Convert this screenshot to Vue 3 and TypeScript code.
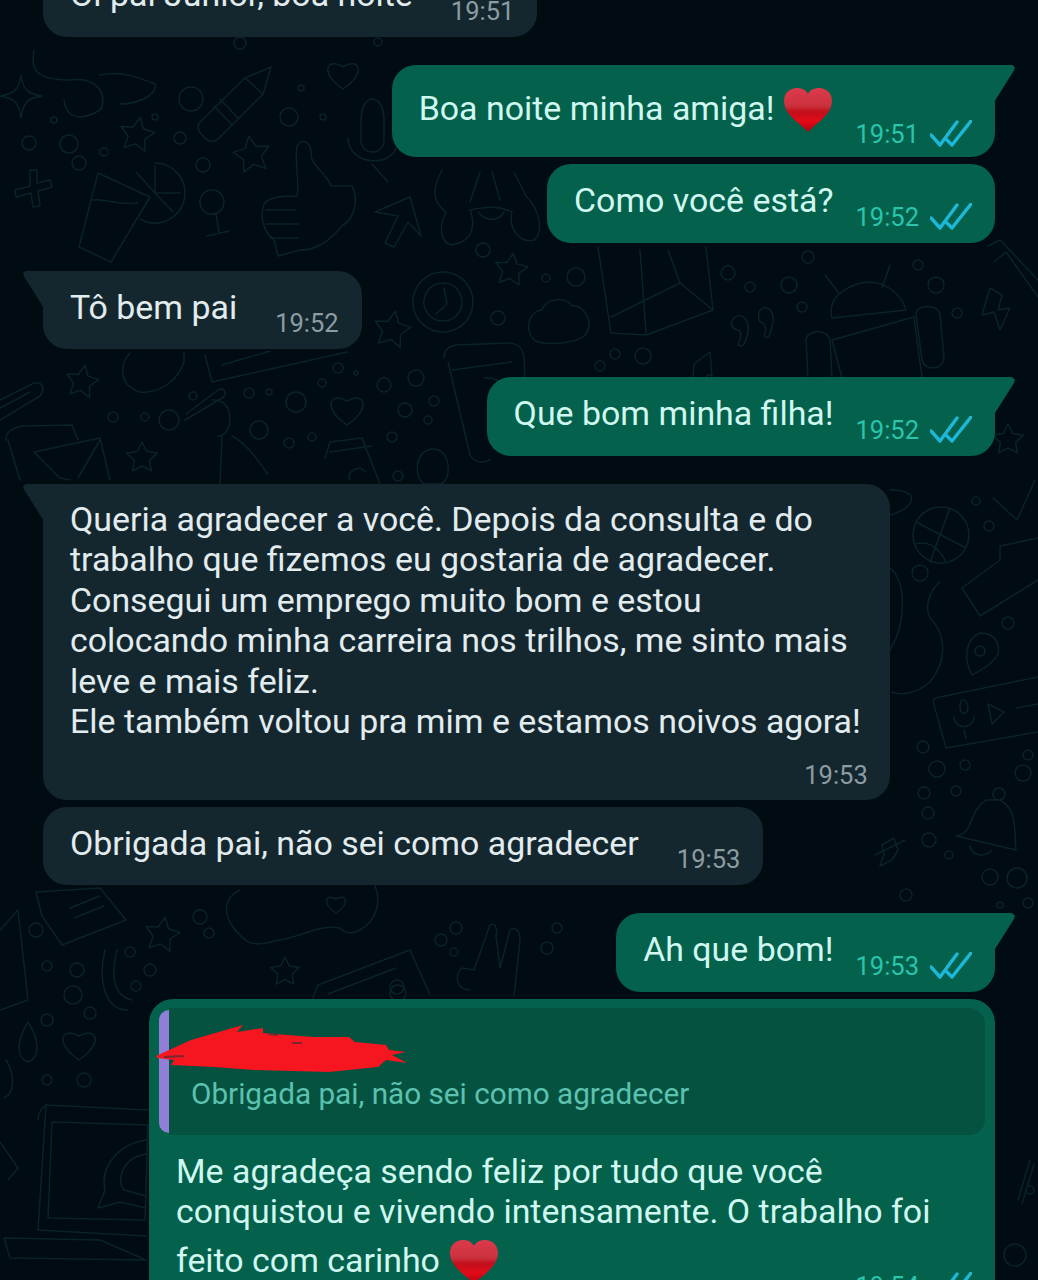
<script setup lang="ts">
type Msg = {
  text: string
  time: string
  out?: boolean
  tail?: boolean
  heart?: boolean
  stacked?: boolean
}

const messages: Msg[] = [
  { text: 'Oi pai Junior, boa noite', time: '19:51' },
  { text: 'Boa noite minha amiga!', time: '19:51', out: true, tail: true, heart: true },
  { text: 'Como você está?', time: '19:52', out: true },
  { text: 'Tô bem pai', time: '19:52', tail: true },
  { text: 'Que bom minha filha!', time: '19:52', out: true, tail: true },
  {
    text: 'Queria agradecer a você. Depois da consulta e do\ntrabalho que fizemos eu gostaria de agradecer.\nConsegui um emprego muito bom e estou\ncolocando minha carreira nos trilhos, me sinto mais\nleve e mais feliz.\nEle também voltou pra mim e estamos noivos agora!',
    time: '19:53',
    tail: true,
    stacked: true,
  },
  { text: 'Obrigada pai, não sei como agradecer', time: '19:53' },
  { text: 'Ah que bom!', time: '19:53', out: true, tail: true },
]

function star(cx: number, cy: number, r: number, rot = 0) {
  let d = ''
  for (let i = 0; i < 10; i++) {
    const rad = i % 2 ? r * 0.5 : r
    const a = ((i * 36 + rot - 90) * Math.PI) / 180
    d += `${i ? 'L' : 'M'}${(cx + rad * Math.cos(a)).toFixed(1)} ${(cy + rad * Math.sin(a)).toFixed(1)}`
  }
  return d + 'Z'
}

function heart(cx: number, cy: number, r: number) {
  return `M${cx} ${cy + r}C${cx - r * 1.5} ${cy} ${cx - r} ${cy - r} ${cx} ${cy - r * 0.4}C${cx + r} ${cy - r} ${cx + r * 1.5} ${cy} ${cx} ${cy + r}Z`
}

const dots: number[][] = [
  [191, 99, 12], [289, 117, 9], [29, 143, 7], [69, 144, 9], [79, 163, 7], [180, 138, 6], [203, 165, 7],
  [54, 120, 3], [155, 117, 3], [323, 117, 3], [301, 88, 3], [104, 152, 4], [240, 43, 6], [378, 42, 4],
  [483, 250, 7], [576, 277, 9], [789, 285, 8], [728, 273, 7], [936, 285, 8], [808, 257, 6], [918, 265, 5],
  [750, 287, 5], [802, 307, 5], [957, 313, 5], [643, 356, 8], [615, 354, 5], [600, 366, 5], [498, 318, 7],
  [546, 278, 4], [416, 378, 8], [384, 385, 7], [405, 410, 7], [434, 401, 5], [428, 420, 4], [392, 437, 5],
  [398, 476, 5], [113, 417, 5], [145, 417, 4], [169, 420, 10], [193, 396, 4], [249, 393, 5], [269, 392, 3],
  [296, 402, 10], [259, 430, 9], [289, 443, 5], [312, 437, 4], [322, 383, 4], [338, 368, 5], [356, 373, 2],
  [920, 573, 8], [989, 526, 5], [976, 501, 4], [1008, 623, 6], [923, 747, 6], [937, 769, 8], [965, 765, 5],
  [924, 793, 6], [956, 791, 5], [928, 813, 6], [929, 840, 7], [949, 855, 4], [1023, 773, 8], [1028, 755, 5],
  [990, 877, 8], [1017, 878, 10], [1028, 903, 5], [1000, 905, 3], [906, 895, 6],
  [200, 917, 7], [209, 933, 5], [36, 930, 7], [47, 966, 5], [77, 970, 7], [73, 995, 9], [90, 1013, 6],
  [47, 1020, 6], [47, 1080, 5], [84, 1080, 7], [150, 970, 6], [130, 952, 5], [136, 986, 5], [441, 940, 6],
  [456, 928, 6], [454, 952, 4], [547, 948, 6], [557, 928, 5], [397, 987, 7], [1015, 1255, 11], [1030, 1190, 4],
]

const doodles: string[] = [
  // stars
  star(137, 135, 18, 10), star(252, 155, 19, -10), star(511, 270, 17, 8), star(82, 382, 17, 10),
  star(142, 458, 16), star(162, 935, 18, 10), star(285, 972, 15), star(392, 330, 19, 10), star(1008, 440, 16),
  // sparkle and cross
  'M21 75C23 90 28 94 42 96C28 98 23 102 21 118C19 102 14 98 0 96C14 94 19 90 21 75Z',
  'M30 170L37 170L37 183L50 180L52 187L38 191L40 206L33 207L31 193L16 197L15 190L30 186Z',
  // rocket
  'M200 122L245 78L271 67L263 94L218 139C212 144 206 140 203 136C199 132 196 127 200 122ZM214 106L232 125M220 99L238 118M245 78L263 94',
  // hearts and blobs
  heart(343, 73, 16), heart(347, 408, 17), heart(336, 903, 10), heart(79, 1043, 17),
  'M34 50C30 70 36 80 70 80C100 76 108 98 100 110C80 122 66 118 64 100M100 75C120 70 140 78 155 84C158 92 142 104 120 104',
  // drink
  'M98 173L150 197L111 262L79 247ZM92 200C105 198 118 206 138 203M155 163A30 30 0 1 1 140 219M155 193L180 193M155 193L155 166M155 193L173 212M155 193L136 172',
  // goblet
  'M212 190A12 12 0 1 1 211.9 190ZM216 214L219 232M207 236L229 231',
  // thumb up
  'M297 146C303 136 312 144 311 155C311 165 327 174 331 186L352 186C358 198 356 218 342 226C330 240 318 250 300 250L278 256L274 240C262 230 260 216 264 204C270 196 286 196 297 196C300 180 294 160 297 146ZM266 210L296 210M266 224L298 224M270 238L298 238',
  // mic and arrow
  'M361 120C361 92 384 92 384 120L384 140C384 156 361 156 361 140ZM348 138C348 166 396 170 398 140M372 164L388 182',
  'M375 212L410 197L421 236L408 222L394 247L385 243L398 216Z',
  // bunny
  'M442 170C428 196 438 206 446 212C436 232 444 248 456 244C472 240 476 226 470 210C488 206 500 206 512 212C508 228 520 244 534 240C544 232 540 210 526 196L514 172M470 202L480 172M500 200L492 172M478 212C486 222 498 222 504 212',
  // clock
  'M443 272A30 30 0 1 1 442.9 272ZM443 283A19 19 0 1 1 442.9 283ZM444 288L447 304L436 314',
  // map, cloud, quotes
  'M598 247L611 333L646 335L713 310L706 247M611 317L680 283L713 310M640 250L646 333M668 250L680 283',
  'M534 340C522 326 532 310 542 310C546 298 566 296 572 306C584 304 594 322 586 334C578 344 544 346 534 340Z',
  'M734 318C740 312 750 318 748 332C746 342 742 350 738 344C742 336 742 332 738 330C730 328 730 322 734 318ZM760 310C768 304 776 312 772 326C770 336 768 340 764 336C768 328 764 322 760 322C758 318 758 314 760 310Z',
  // android
  'M825 275L838 292M890 265L882 288M832 318C826 296 850 284 868 282C888 282 902 296 906 310ZM832 340L914 317L922 378L842 378ZM806 340C806 330 828 328 830 340L832 378L808 378ZM916 314C916 304 938 304 940 314L944 358C942 372 924 370 922 360Z',
  // phone
  'M444 358C444 350 448 347 456 345L508 343C518 343 522 348 524 356L525 380M452 370L512 362M448 362L470 455C474 462 482 464 490 460M484 378C500 376 514 392 516 412',
  // bolt and guitar
  'M990 288L982 315L994 312L1000 330L1010 308L998 310L1002 295Z',
  'M988 246L1000 240L1038 280M994 262L1006 252L1038 297',
  // music note
  'M692 388L694 364L710 352L712 376M692 388C686 384 684 392 690 394M712 376C706 372 704 380 710 382',
  // paperclip, envelope
  'M0 420L40 396C46 388 42 380 32 384L0 400M0 408L30 392',
  'M6 440C6 430 14 428 22 426L72 425L78 440M20 480L8 440M34 452L100 438L110 480M34 452L60 478L70 480M100 440L78 478',
  // blob with card
  'M130 353C118 366 120 386 140 392C160 394 178 380 184 362L184 352',
  'M205 355L212 382L347 352M222 365L270 351',
  // calendar, balloon, party
  'M325 458L330 442L362 438L380 484M330 452L372 446M350 480C345 470 362 464 365 472',
  'M433 449C452 449 452 482 440 484L424 484C412 476 416 449 433 449Z',
  'M185 420L222 398C228 394 224 386 218 390L186 414M212 400C236 398 234 436 218 436M222 436L220 484M232 436C250 446 260 464 268 474',
  // basketball, pencil, check
  'M941 507A28 28 0 1 1 940.9 507ZM916 522L966 548M950 508L930 562M915 544C930 540 940 550 946 562',
  'M962 588L1000 560L1000 546L1038 538M962 588L980 616L1038 580',
  'M993 498L1017 520L1035 480',
  // planet with moon
  'M890 490C925 490 912 510 890 515M890 568C905 580 908 620 890 650M940 582C930 590 924 606 930 618C946 634 948 660 930 682C915 695 900 695 892 692',
  // pin
  'M980 633C994 633 1000 642 998 654C994 662 986 668 972 675C964 660 964 640 980 633ZM980 646A5 5 0 1 1 979.9 646Z',
  // video card and controls
  'M935 698L1038 677M935 698C932 700 934 704 936 712L946 748L1038 732M960 706C960 716 968 716 968 706C966 698 960 698 960 706ZM954 716C954 730 974 730 974 716M964 730L966 738M988 704L1004 712L992 724ZM1016 708L1038 704',
  // bell
  'M999 788A6 6 0 1 1 998.9 788ZM986 800C968 812 974 834 956 836L1016 850C1014 830 1018 810 1000 800ZM970 846C972 856 984 858 992 850',
  // star x
  'M882 845L894 838L898 850L892 860L880 866L884 854ZM875 855L905 840',
  // card top left
  'M36 892L100 888L126 920L62 945L42 916ZM70 908L100 896M74 918L104 906',
  // big blob
  'M240 890C220 900 224 920 240 935C252 950 268 942 280 940C304 936 320 924 340 928M340 928C350 938 362 930 370 922C382 906 378 890 372 880',
  // camera, peace hand, crescent
  'M312 1000L318 985L410 950L430 995M328 994L396 968M398 985A8 8 0 1 1 397.9 985Z',
  'M470 990C456 990 454 974 462 968L474 970L490 925C494 922 498 928 496 936L500 968L510 930C516 926 520 932 520 940L514 996',
  'M105 950C98 980 104 1010 128 1010M117 950C110 978 114 996 132 1000',
  // drops
  'M28 1022C40 1040 40 1058 28 1062C16 1058 16 1042 28 1022ZM6 1060C16 1076 14 1094 4 1098',
  'M18 910L0 930M18 910L28 1000L0 1010',
  // laptop
  'M46 1105L148 1110M38 1120C38 1112 42 1108 46 1105L38 1230L146 1236M52 1122L148 1125L145 1220L48 1218ZM4 1238L100 1240L146 1260L10 1258Z',
  // chat bubble
  'M146 1140C115 1145 100 1170 105 1190L98 1208L120 1202L146 1208M146 1154C122 1158 116 1180 124 1190L146 1196',
  // crooked things
  'M0 1142L18 1168L8 1180',
  'M1030 1160L1018 1200M1034 1164L1022 1204',
]
</script>

<template>
  <main class="screen">
    <svg class="wallpaper" width="1038" height="1280" viewBox="0 0 1038 1280" fill="none" aria-hidden="true">
      <path v-for="(d, i) in doodles" :key="i" :d="d" />
      <circle v-for="(c, i) in dots" :key="`c${i}`" :cx="c[0]" :cy="c[1]" :r="c[2]" />
    </svg>

    <svg width="0" height="0" class="defs" aria-hidden="true">
      <defs>
        <linearGradient id="heartFill" x1="0" y1="0" x2="0" y2="1">
          <stop offset="0" stop-color="#dc3a4a" />
          <stop offset="0.4" stop-color="#cc323e" />
          <stop offset="0.54" stop-color="#c20f1b" />
          <stop offset="0.75" stop-color="#e20a18" />
          <stop offset="1" stop-color="#b0000e" />
        </linearGradient>
      </defs>
    </svg>

    <div class="chat">
      <article
        v-for="(m, i) in messages"
        :key="i"
        class="bubble"
        :class="{ out: m.out, tail: m.tail, stacked: m.stacked, tall: m.heart }"
      >
        <p class="text">{{ m.text }}<svg v-if="m.heart" class="heart" viewBox="0 0 50 44"><path fill="url(#heartFill)" d="M25 44C18 36 1 27 1 13C1 5 7 0 14 0C19 0 23 2 25 6C27 2 31 0 36 0C43 0 49 5 49 13C49 27 32 36 25 44Z" /></svg></p>
        <div class="meta">
          <span class="time">{{ m.time }}</span>
          <svg v-if="m.out" class="ticks" viewBox="0 0 42 28" fill="none"><path d="M1 15L10 25L27 2M17 20L22 25L41 1" /></svg>
        </div>
      </article>

      <article class="bubble out reply">
        <div class="quote">
          <svg class="scribble" viewBox="0 0 251 48" aria-hidden="true">
            <path fill="#f5161f" d="M0 32L35 16L87 1L81 8L107 4L107 9L156 13L193 13L199 18L230 21L233 26L250 28L236 31L251 39L230 36L222 43L173 48L98 46L58 43L15 41L18 36L1 34Z" />
            <path stroke="#7c2730" stroke-width="2" fill="none" d="M8 33L28 32M112 10L122 11M136 19L146 19" />
          </svg>
          <span class="quote-text">Obrigada pai, não sei como agradecer</span>
        </div>
        <p class="reply-text">Me agradeça sendo feliz por tudo que você<br />conquistou e vivendo intensamente. O trabalho foi</p>
        <div class="reply-last">
          <p class="text">feito com carinho<svg class="heart" viewBox="0 0 50 44"><path fill="url(#heartFill)" d="M25 44C18 36 1 27 1 13C1 5 7 0 14 0C19 0 23 2 25 6C27 2 31 0 36 0C43 0 49 5 49 13C49 27 32 36 25 44Z" /></svg></p>
          <div class="meta">
            <span class="time">19:54</span>
            <svg class="ticks" viewBox="0 0 42 28" fill="none"><path d="M1 15L10 25L27 2M17 20L22 25L41 1" /></svg>
          </div>
        </div>
      </article>
    </div>
  </main>
</template>

<style scoped>
.screen {
  position: relative;
  width: 1038px;
  height: 1280px;
  overflow: hidden;
  background: #010b12;
  font-family: Roboto, "Liberation Sans", sans-serif;
}

.wallpaper {
  position: absolute;
  left: 0;
  top: 0;
}

.wallpaper path,
.wallpaper circle {
  stroke: #0a2329;
  stroke-width: 1.5;
  stroke-linejoin: round;
  stroke-linecap: round;
}

.defs {
  position: absolute;
}

.chat {
  position: relative;
  display: flex;
  flex-direction: column;
  align-items: flex-start;
  gap: 7px;
  padding: 0 43px;
}

.bubble {
  position: relative;
  display: flex;
  align-items: flex-end;
  gap: 38px;
  padding: 17px 23px 21px 27px;
  border-radius: 24px;
  background: #14272f;
  color: #e2ecef;
}

.bubble:first-child {
  margin-top: -42px;
}

.bubble.tail {
  margin-top: 21px;
  border-top-left-radius: 0;
}

.bubble.out {
  align-self: flex-end;
  gap: 22px;
  background: #03614c;
  color: #d0f7f0;
}

.bubble.tail::before {
  content: "";
  position: absolute;
  top: 0;
  left: -20px;
  width: 24px;
  height: 36px;
  background: inherit;
  clip-path: polygon(3px 0, 100% 0, 100% 100%, 83% 100%, 1px 6px, 0 3px);
}

.bubble.out.tail {
  border-top-left-radius: 24px;
  border-top-right-radius: 0;
}

.bubble.out.tail::before {
  left: auto;
  right: -20px;
  clip-path: polygon(0 0, calc(100% - 3px) 0, 100% 3px, calc(100% - 1px) 6px, 17% 100%, 0 100%);
}

.bubble.stacked {
  flex-direction: column;
  align-items: stretch;
  gap: 0;
  padding: 16px 29px 10px 27px;
}

.bubble.stacked .meta {
  justify-content: flex-end;
  margin: 17px -7px 0 0;
}

.bubble.tall {
  padding-top: 23px;
  padding-bottom: 25.5px;
}

.bubble.tall .meta {
  margin-bottom: -17px;
}

.text {
  margin: 0;
  font-size: 33.9px;
  line-height: 40.5px;
  white-space: pre-line;
}

.heart {
  display: inline-block;
  width: 50px;
  height: 44px;
  margin-left: 9px;
  vertical-align: -12px;
}

.meta {
  display: flex;
  align-items: center;
  gap: 11px;
  height: 30px;
  margin-bottom: -10px;
}

.time {
  font-size: 25.5px;
  line-height: 30px;
  color: #8c9ca2;
}

.out .time {
  color: #2bc4ac;
}

.ticks {
  width: 42px;
  height: 28px;
}

.ticks path {
  stroke: #1db7d8;
  stroke-width: 3.4;
  stroke-linecap: round;
  stroke-linejoin: round;
}

.bubble.out.reply {
  display: block;
  width: 846px;
  padding: 9px 10px 30px;
  box-sizing: border-box;
  border-radius: 24px;
}

.quote {
  position: relative;
  display: flex;
  flex-direction: column;
  justify-content: flex-end;
  height: 127px;
  margin-left: 10px;
  padding: 0 0 24px 22px;
  box-sizing: border-box;
  border-radius: 0 16px 16px 0;
  background: #04523f;
}

.quote::before {
  content: "";
  position: absolute;
  left: -10px;
  top: 2px;
  bottom: 2px;
  width: 10px;
  border-radius: 12px 0 0 12px;
  background: #8f7fd9;
}

.scribble {
  position: absolute;
  left: -13px;
  top: 16px;
  width: 251px;
  height: 48px;
}

.quote-text {
  font-size: 29.7px;
  line-height: 34px;
  color: #5cc2b0;
}

.reply-text {
  margin: 17px 0 0 17px;
  font-size: 33.9px;
  line-height: 40.5px;
  width: 810px;
}

.reply-last {
  display: flex;
  justify-content: space-between;
  align-items: flex-start;
  margin: 7px 13px 0 17px;
}

.reply-last .meta {
  margin-top: 31px;
}
</style>

<style>
html,
body {
  background: #010b12;
}
</style>
